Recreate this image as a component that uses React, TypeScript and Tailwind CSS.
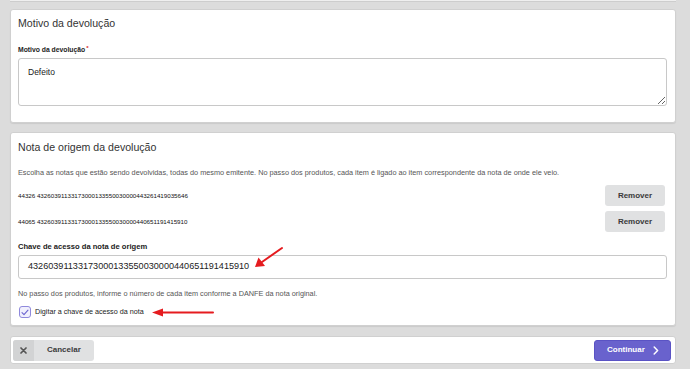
import React from "react";

const font = { fontFamily: '"Liberation Sans", Arial, sans-serif' };

function RemoverButton() {
  return (
    <button className="h-[21px] w-[60px] rounded-[3px] bg-[#e0e1e2] text-[8px] font-bold leading-[21px] text-[#3a3a3a]">
      Remover
    </button>
  );
}

export default function App() {
  const notas = [
    "44326 43260391133173000133550030000443261419035646",
    "44065 43260391133173000133550030000440651191415910",
  ];

  return (
    <div className="relative h-[369px] w-[690px] overflow-hidden bg-[#dcdcdc]" style={font}>
      {/* Fim do card anterior */}
      <div className="ml-[10px] h-[2px] w-[666px] border-b border-[#cdcdcd] bg-[#efefef]" />

      {/* Motivo */}
      <section className="ml-[10px] mt-[7px] h-[114px] w-[666px] rounded-[3px] border border-[#d0d0d0] bg-white px-[7px] pt-[7px] shadow-[0_1px_1px_rgba(0,0,0,0.08)]">
        <h2 className="h-[13px] text-[10.6px] leading-[13px] text-[#333]">Motivo da devolução</h2>
        <label className="mt-[15px] block h-[9px] text-[6.8px] font-bold leading-[9px] text-[#222]">
          Motivo da devolução<span className="relative -top-[2px] ml-[1px] text-[6px] text-[#db2828]">*</span>
        </label>
        <textarea
          readOnly
          value="Defeito"
          className="mt-[4px] block h-[48px] w-[649px] rounded-[3px] border border-[#c8c8c8] px-[9px] pt-[8px] text-[8.5px] leading-[10px] text-[#222] outline-none"
        />
      </section>

      {/* Nota de origem */}
      <section className="ml-[10px] mt-[9px] h-[194px] w-[666px] rounded-[3px] border border-[#d0d0d0] bg-white px-[7px] pt-[8px] shadow-[0_1px_1px_rgba(0,0,0,0.08)]">
        <h2 className="h-[13px] text-[10.6px] leading-[13px] text-[#333]">Nota de origem da devolução</h2>
        <p className="mt-[14px] h-[9px] whitespace-nowrap text-[7.3px] leading-[9px] text-[#555]">
          Escolha as notas que estão sendo devolvidas, todas do mesmo emitente. No passo dos produtos, cada item é ligado ao item correspondente da nota de onde ele veio.
        </p>
        <div className="mt-[8px] flex flex-col gap-[5px] pr-[3px]">
          {notas.map((n) => (
            <div key={n} className="flex h-[21px] items-center justify-between">
              <span className="text-[6.2px] text-[#111]">{n}</span>
              <RemoverButton />
            </div>
          ))}
        </div>
        <label className="mt-[10px] block h-[9px] text-[7.6px] font-bold leading-[9px] text-[#222]">
          Chave de acesso da nota de origem
        </label>
        <div className="mt-[4px] flex h-[24px] w-[649px] items-center rounded-[3px] border border-[#c8c8c8] px-[9px] text-[9.1px] text-[#222]">
          43260391133173000133550030000440651191415910
        </div>
        <p className="mt-[10px] h-[9px] text-[7.3px] leading-[9px] text-[#555]">
          No passo dos produtos, informe o número de cada item conforme a DANFE da nota original.
        </p>
        <div className="mt-[8px] flex h-[12px] items-center gap-[4px] pl-[1px]">
          <span className="flex h-[12px] w-[12px] items-center justify-center rounded-[3px] border border-[#8f89dc] bg-[#f1f0fd]">
            <svg width="8" height="7" viewBox="0 0 8 7" fill="none">
              <path d="M1 3.6 L3 5.6 L7 1.2" stroke="#6b64cf" strokeWidth="1.1" strokeLinecap="round" strokeLinejoin="round" />
            </svg>
          </span>
          <span className="text-[7.2px] text-[#222]">Digitar a chave de acesso da nota</span>
        </div>
      </section>

      {/* Rodapé */}
      <footer className="ml-[10px] mt-[10px] flex h-[28px] w-[666px] items-center justify-between rounded-[3px] border border-[#d0d0d0] bg-white pl-[2px] pr-[4px]">
        <button className="flex h-[21px] w-[81px] items-stretch overflow-hidden rounded-[3px] bg-[#e0e1e2] text-[8px] font-bold text-[#3a3a3a]">
          <span className="flex w-[21px] items-center justify-center bg-[#d2d3d4]">
            <svg width="7" height="7" viewBox="0 0 7 7">
              <path d="M1 1 L6 6 M6 1 L1 6" stroke="#555" strokeWidth="1.7" strokeLinecap="round" />
            </svg>
          </span>
          <span className="flex flex-1 items-center pl-[13px]">Cancelar</span>
        </button>
        <button className="flex h-[21px] w-[77px] items-center rounded-[3px] border border-[#5a53c4] bg-[#6962cd] pl-[12px] text-[8px] font-bold text-white">
          Continuar
          <svg className="ml-[8px]" width="6" height="9" viewBox="0 0 6 9" fill="none">
            <path d="M1.2 1 L4.6 4.5 L1.2 8" stroke="white" strokeWidth="1.5" strokeLinecap="round" strokeLinejoin="round" />
          </svg>
        </button>
      </footer>

      {/* Setas de anotação */}
      <svg className="pointer-events-none absolute inset-0" width="690" height="369" viewBox="0 0 690 369">
        <line x1="282" y1="248" x2="262" y2="262" stroke="#e51b1f" strokeWidth="2" strokeLinecap="round" />
        <path d="M255 267 L258.5 257.5 L265 266 Z" fill="#e51b1f" />
        <line x1="213" y1="312.5" x2="162" y2="312.5" stroke="#e51b1f" strokeWidth="2" strokeLinecap="round" />
        <path d="M152 312.5 L163 308.5 L163 316.5 Z" fill="#e51b1f" />
      </svg>
    </div>
  );
}
